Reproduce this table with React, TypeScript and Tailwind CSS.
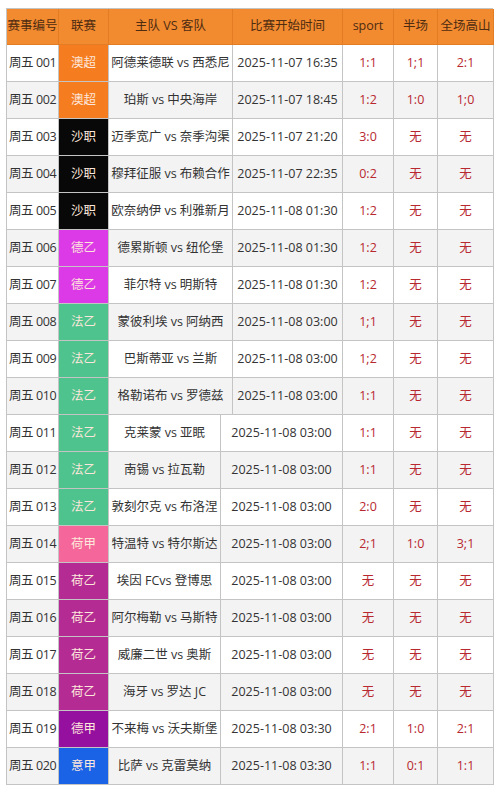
const leagueColors: Record<string, string> = {
  澳超: "bg-[#f57c1f]",
  沙职: "bg-[#080808]",
  德乙: "bg-[#dc3ae6]",
  法乙: "bg-[#4fc38e]",
  荷甲: "bg-[#f5679a]",
  荷乙: "bg-[#b32b93]",
  德甲: "bg-[#95109f]",
  意甲: "bg-[#1a63e6]",
};

type Match = [string, string, string, string, string, string, string];

const matches: Match[] = [
  ["周五 001", "澳超", "阿德莱德联 vs 西悉尼", "2025-11-07 16:35", "1:1", "1;1", "2:1"],
  ["周五 002", "澳超", "珀斯 vs 中央海岸", "2025-11-07 18:45", "1:2", "1:0", "1;0"],
  ["周五 003", "沙职", "迈季宽广 vs 奈季沟渠", "2025-11-07 21:20", "3:0", "无", "无"],
  ["周五 004", "沙职", "穆拜征服 vs 布赖合作", "2025-11-07 22:35", "0:2", "无", "无"],
  ["周五 005", "沙职", "欧奈纳伊 vs 利雅新月", "2025-11-08 01:30", "1:2", "无", "无"],
  ["周五 006", "德乙", "德累斯顿 vs 纽伦堡", "2025-11-08 01:30", "1:2", "无", "无"],
  ["周五 007", "德乙", "菲尔特 vs 明斯特", "2025-11-08 01:30", "1:2", "无", "无"],
  ["周五 008", "法乙", "蒙彼利埃 vs 阿纳西", "2025-11-08 03:00", "1;1", "无", "无"],
  ["周五 009", "法乙", "巴斯蒂亚 vs 兰斯", "2025-11-08 03:00", "1;2", "无", "无"],
  ["周五 010", "法乙", "格勒诺布 vs 罗德兹", "2025-11-08 03:00", "1:1", "无", "无"],
  ["周五 011", "法乙", "克莱蒙 vs 亚眠", "2025-11-08 03:00", "1:1", "无", "无"],
  ["周五 012", "法乙", "南锡 vs 拉瓦勒", "2025-11-08 03:00", "1:1", "无", "无"],
  ["周五 013", "法乙", "敦刻尔克 vs 布洛涅", "2025-11-08 03:00", "2:0", "无", "无"],
  ["周五 014", "荷甲", "特温特 vs 特尔斯达", "2025-11-08 03:00", "2;1", "1:0", "3;1"],
  ["周五 015", "荷乙", "埃因 FCvs 登博思", "2025-11-08 03:00", "无", "无", "无"],
  ["周五 016", "荷乙", "阿尔梅勒 vs 马斯特", "2025-11-08 03:00", "无", "无", "无"],
  ["周五 017", "荷乙", "威廉二世 vs 奥斯", "2025-11-08 03:00", "无", "无", "无"],
  ["周五 018", "荷乙", "海牙 vs 罗达 JC", "2025-11-08 03:00", "无", "无", "无"],
  ["周五 019", "德甲", "不来梅 vs 沃夫斯堡", "2025-11-08 03:30", "2:1", "1:0", "2:1"],
  ["周五 020", "意甲", "比萨 vs 克雷莫纳", "2025-11-08 03:30", "1:1", "0:1", "1:1"],
];

const headers = ["赛事编号", "联赛", "主队 VS 客队", "比赛开始时间", "sport", "半场", "全场高山"];

const cell = "flex items-center justify-center border-r border-b border-[#c4c4c4] whitespace-nowrap";

function Row({ m, index, cols }: { m: Match; index: number; cols: string }) {
  const bg = index % 2 === 0 ? "bg-white" : "bg-[#f3f3f3]";
  return (
    <div className={`grid h-[37px] ${cols} ${bg}`}>
      <div className={`${cell} justify-start overflow-hidden pl-[2px] tracking-[-0.4px] text-[#333]`}>{m[0]}</div>
      <div className={`${cell} ${leagueColors[m[1]]} text-[#fde7dc]`}>{m[1]}</div>
      <div className={`${cell} text-[#333]`}>{m[2]}</div>
      <div className={`${cell} text-[#333]`}>{m[3]}</div>
      <div className={`${cell} text-[#b8282f]`}>{m[4]}</div>
      <div className={`${cell} text-[#b8282f]`}>{m[5]}</div>
      <div className={`${cell} text-[#b8282f]`}>{m[6]}</div>
    </div>
  );
}

export default function App() {
  const topCols = "grid-cols-[52px_50px_124px_110px_51px_44px_56px]";
  const bottomCols = "grid-cols-[52px_50px_112px_122px_51px_44px_56px]";
  return (
    <div className="h-[796px] w-[500px] bg-white pt-[8px] pl-[6px] font-['Open_Sans','Noto_Sans_CJK_SC',sans-serif] text-[12.5px]">
      <div className="w-[487px] border-l border-t border-[#c4c4c4]">
        <div className={`grid h-[36px] ${topCols} bg-[#f28a30] text-[#4e2c10]`}>
          {headers.map((h) => (
            <div key={h} className="flex items-center justify-center border-r border-b border-[#e37d25] whitespace-nowrap">
              {h}
            </div>
          ))}
        </div>
        {matches.slice(0, 10).map((m, i) => (
          <Row key={m[0]} m={m} index={i} cols={topCols} />
        ))}
        {matches.slice(10).map((m, i) => (
          <Row key={m[0]} m={m} index={i + 10} cols={bottomCols} />
        ))}
      </div>
    </div>
  );
}
